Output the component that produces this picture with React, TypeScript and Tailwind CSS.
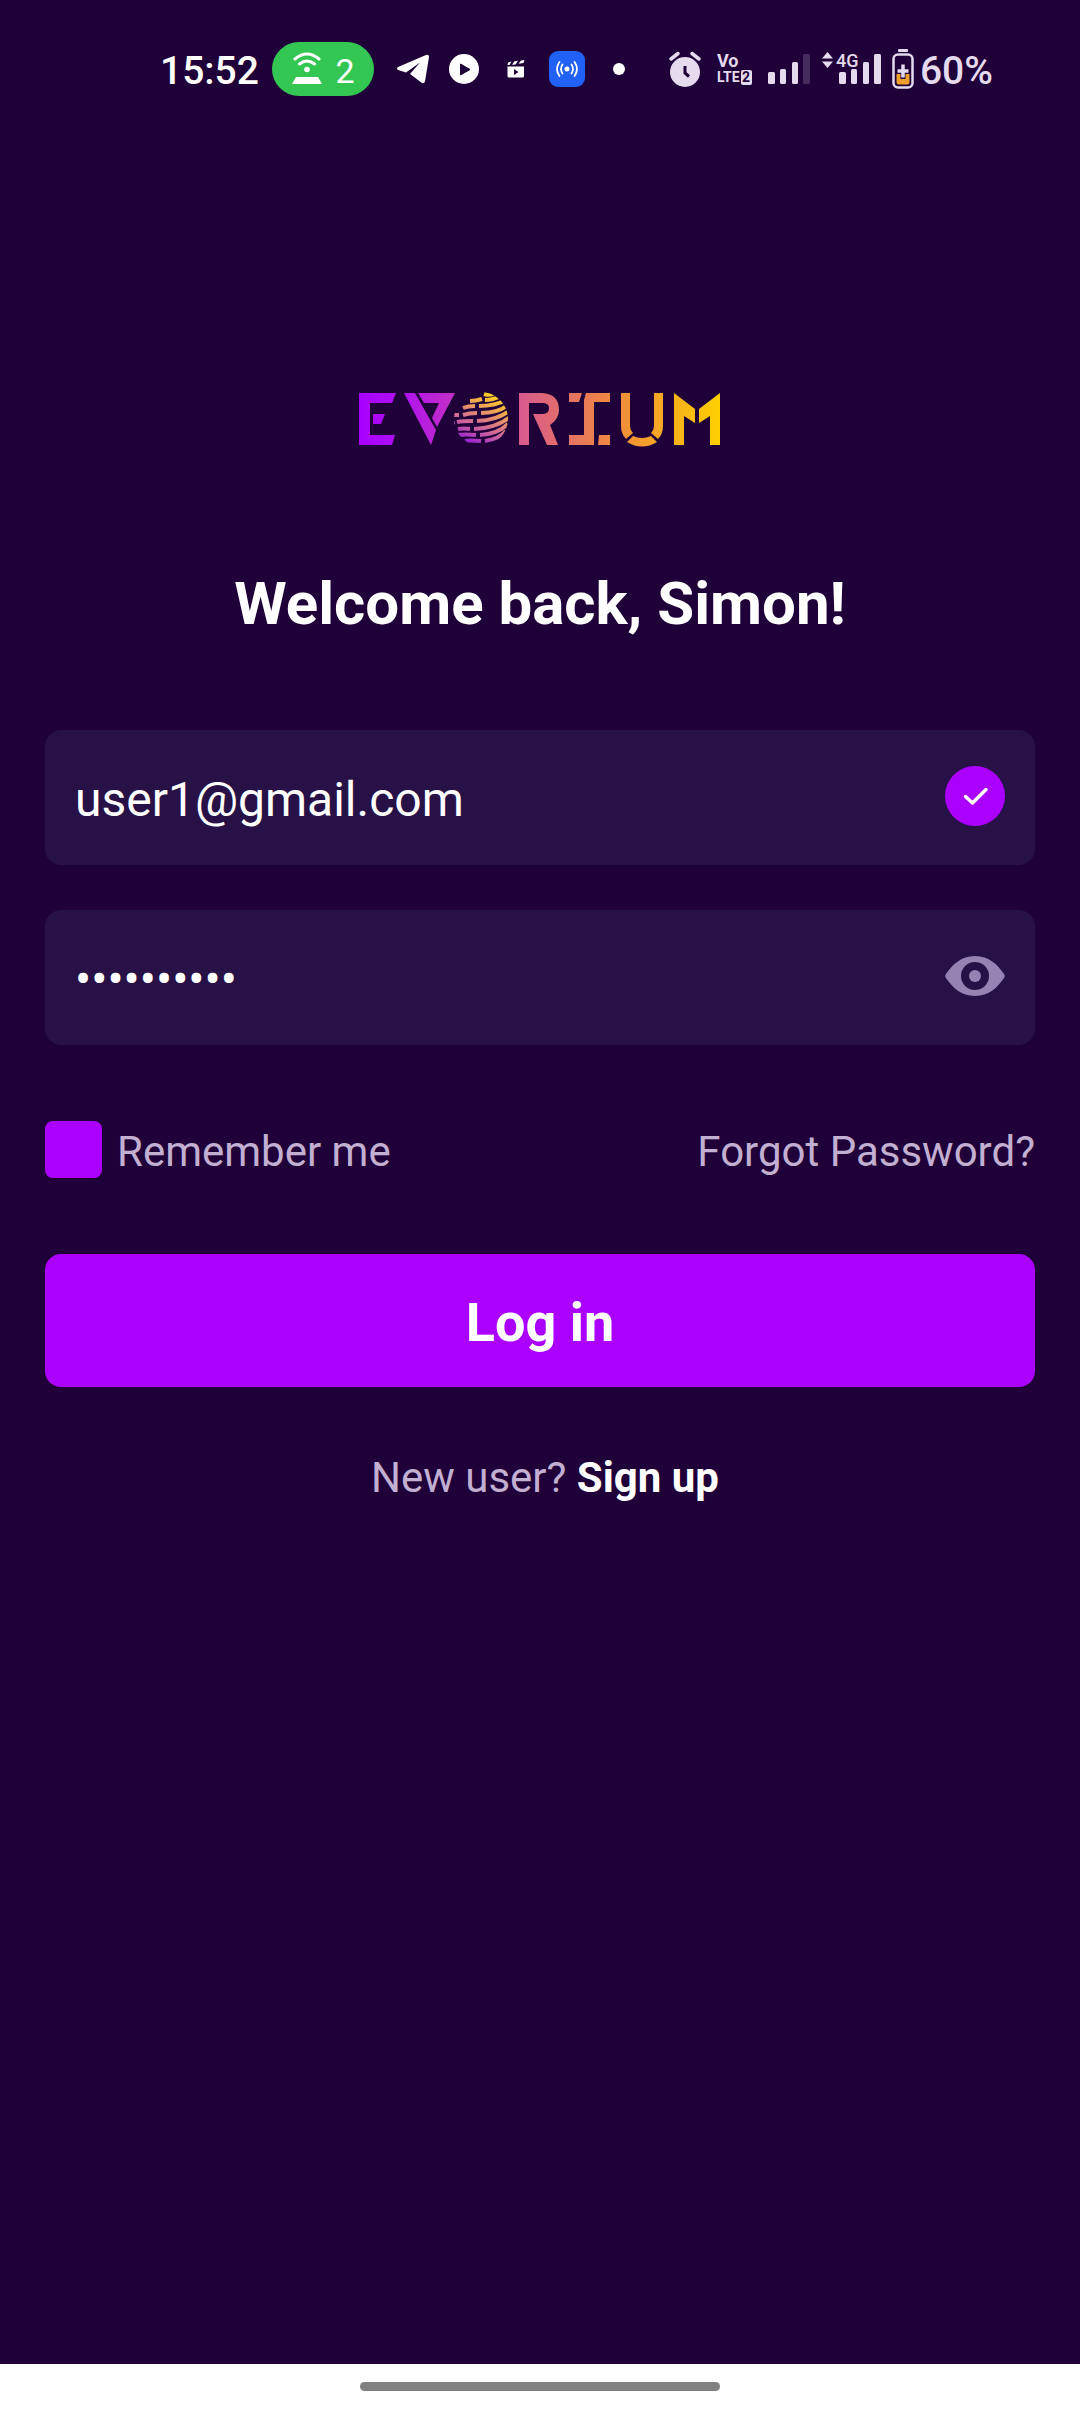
import { useState } from "react";

function Hotspot() {
  return (
    <svg width="32" height="34" viewBox="0 0 32 34" fill="none" aria-hidden="true">
      <path d="M4 7Q16 -3 28 7" stroke="#fff" strokeWidth="3" strokeLinecap="round" />
      <path d="M8.500 12Q16 6 23.500 12" stroke="#fff" strokeWidth="3" strokeLinecap="round" />
      <circle cx="16" cy="17.500" r="2.800" fill="#fff" />
      <path d="M5 25H27L31 32H1Z" fill="#fff" />
    </svg>
  );
}

function Telegram() {
  return (
    <svg width="34" height="32" viewBox="0 0 34 32" aria-hidden="true">
      <path
        d="M30 2L2 14Q0 15.500 2 17L10 19.500L24 9.500L14 21L26 30Q28 31 29 28.500L33 4Q33 1 30 2Z"
        fill="#fff"
      />
    </svg>
  );
}

function PlayCircle() {
  return (
    <svg width="30" height="30" viewBox="0 0 30 30" aria-hidden="true">
      <circle cx="15" cy="15" r="15" fill="#fff" />
      <path d="M11.500 10V21L21 15.500Z" fill="#1f0038" stroke="#1f0038" strokeLinejoin="round" />
    </svg>
  );
}

function Clapper() {
  return (
    <svg width="18" height="18" viewBox="0 0 18 18" fill="#fff" aria-hidden="true">
      <path d="M1 2.500L4.500 1.500L2.500 5H0.500ZM7.500 1.200L11 0.800L8.500 4.500L5 4.800ZM14 0.500L17.500 0L16.500 3L11.500 3.800Z" />
      <path fillRule="evenodd" d="M0.500 6.500H17V16Q17 17.500 15.500 17.500H2Q0.500 17.500 0.500 16ZM7 9V15L11.500 12Z" />
    </svg>
  );
}

function Broadcast() {
  return (
    <svg width="36" height="36" viewBox="0 0 36 36" fill="none" aria-hidden="true">
      <rect width="36" height="36" rx="9" fill="#2161f5" />
      <circle cx="18" cy="18" r="2.500" fill="#fff" />
      <g stroke="#fff" strokeWidth="1.800" strokeLinecap="round">
        <path d="M13.500 13.500Q10.500 18 13.500 22.500M22.500 13.500Q25.500 18 22.500 22.500" />
        <path d="M10.500 11Q5.500 18 10.500 25M25.500 11Q30.500 18 25.500 25" />
      </g>
    </svg>
  );
}

function Alarm() {
  return (
    <svg width="34" height="36" viewBox="0 0 34 36" aria-hidden="true">
      <circle cx="17" cy="21" r="15" fill="#e5daee" />
      <path d="M3 8L10 2.500M31 8L24 2.500" stroke="#e5daee" strokeWidth="3.500" strokeLinecap="round" />
      <path d="M17 15V22L21 25.500" fill="none" stroke="#1f0038" strokeWidth="3" />
    </svg>
  );
}

function Bars({ weak = false }: { weak?: boolean }) {
  return (
    <svg width="44" height="31" viewBox="0 0 44 31" fill="#e5daee" aria-hidden="true">
      <rect x="1" y="18" width="7" height="12" rx="1.500" />
      <rect x="13" y="15" width="6" height="15" rx="1.500" />
      <rect x="25" y="8" width="6" height="22" rx="1.500" />
      <rect x="36" y="0" width="7" height="30" rx="1.500" opacity={weak ? 0.2 : 1} />
    </svg>
  );
}

function DataArrows() {
  return (
    <svg width="11" height="16" viewBox="0 0 11 16" fill="#e5daee" aria-hidden="true">
      <path d="M5.500 0L11 6.500H0ZM5.500 16L0 9.500H11Z" />
    </svg>
  );
}

function Battery() {
  return (
    <svg width="22" height="40" viewBox="0 0 22 40" fill="none" aria-hidden="true">
      <rect x="6" y="0" width="10" height="3" rx="1" fill="#e5daee" />
      <rect x="1.500" y="5.500" width="19" height="33" rx="4.500" stroke="#e5daee" strokeWidth="2.500" />
      <path d="M4.500 25H17.500V33Q17.500 35.500 15 35.500H7Q4.500 35.500 4.500 33Z" fill="#efa02c" />
      <path d="M11 14V30M4 22.500H18" stroke="#1f0038" strokeWidth="5" />
      <path d="M11 15.500V28.500M5.500 22H16.500" stroke="#e5daee" strokeWidth="3.500" />
    </svg>
  );
}

function StatusBar() {
  return (
    <header className="flex h-[138px] items-center justify-between pr-[87px] pl-40 text-[39px] leading-none">
      <div className="flex items-center">
        <span className="pt-1 font-medium text-white">15:52</span>
        <span className="ml-[13px] flex h-[54px] w-[102px] items-center justify-center gap-3 rounded-full bg-[#34c652] text-[34px] text-white">
          <Hotspot />
          <span className="pt-1">2</span>
        </span>
        <span className="ml-[22px] flex items-center">
          <Telegram />
          <span className="ml-[19px]"><PlayCircle /></span>
          <span className="ml-7"><Clapper /></span>
          <span className="ml-6"><Broadcast /></span>
          <span className="ml-7 size-3 rounded-full bg-white" />
        </span>
      </div>
      <div className="flex items-center text-[#e5daee]">
        <Alarm />
        <span className="ml-[15px] flex w-9 flex-col text-[18px] leading-4 font-bold">
          <span>Vo</span>
          <span className="flex items-center text-[14px]">
            LTE
            <span className="ml-px w-[11px] rounded-xs bg-[#e5daee] text-center leading-[15px] text-[#1f0038]">2</span>
          </span>
        </span>
        <span className="ml-[14px]"><Bars weak /></span>
        <span className="relative ml-[27px]">
          <Bars />
          <span className="absolute -top-[2px] -left-4 flex items-start gap-[3px] text-[18px] leading-[18px] font-medium">
            <DataArrows />
            4G
          </span>
        </span>
        <span className="ml-[10px]"><Battery /></span>
        <span className="ml-[6px] pt-1 font-medium">60%</span>
      </div>
    </header>
  );
}

function Logo() {
  return (
    <svg width="362" height="56" viewBox="0 0 362 56" role="img" aria-label="Evorium">
      <defs>
        <linearGradient id="brand" gradientUnits="userSpaceOnUse" x1="0" y1="0" x2="362" y2="0">
          <stop offset="0" stopColor="#a800ff" />
          <stop offset="0.120" stopColor="#b011ef" />
          <stop offset="0.450" stopColor="#d95a8c" />
          <stop offset="0.700" stopColor="#f0893f" />
          <stop offset="1" stopColor="#ffd000" />
        </linearGradient>
        <linearGradient id="globe" gradientUnits="userSpaceOnUse" x1="134" y1="3" x2="112" y2="54">
          <stop offset="0" stopColor="#ffd01f" />
          <stop offset="0.400" stopColor="#e58a72" />
          <stop offset="0.700" stopColor="#c65aa6" />
          <stop offset="1" stopColor="#8f18dc" />
        </linearGradient>
        <clipPath id="disc">
          <circle cx="122" cy="27" r="27" />
        </clipPath>
      </defs>
      <g fill="url(#brand)">
        <path d="M0 1H37L33 11H11V43H36L33 53H0Z" />
        <path d="M14 22H26L22 32H14Z" />
        <path d="M45 1H56L77 38L72 53Z" />
        <path d="M59 1H96L78 35L73 26L80 11H65Z" />
        <path d="M160 1H183Q200 2 200 18Q200 27 191 33L199 53H188L174 22H183Q190 22 190 16Q190 11 183 11H170V53H160Z" />
        <path d="M210 1H223L220 10H210ZM227 1H251V10H235V53H210V43H225V8ZM240 43H251V53H239Z" />
        <path d="M262 1H271V34Q271 38 274 41L267 47Q262 42 262 34ZM304 1H295V34Q295 38 292 41L299 47Q304 42 304 34ZM274 44Q283 48 292 44L298 50Q283 59 268 50Z" />
        <path d="M315 1L336 17V31L325 24V53H315ZM361 1L340 17V31L351 24V53H361Z" />
      </g>
      <g clipPath="url(#disc)" fill="none" stroke="url(#globe)" strokeWidth="4">
        <path d="M125 2Q131 4 136 1" />
        <path d="M111 9Q117 9 123 7M126 8Q134 8 142 4" />
        <path d="M104 16Q109 14 116 14M120 14Q136 14 147 8" />
        <path d="M104 23Q110 21 118 21M122 21Q139 21 149 13" />
        <path d="M95 23H100M98 30Q104 29 114 29M118 29Q138 28 150 19" />
        <path d="M94 31H96M99 37Q104 36 111 37M115 37Q138 36 151 25" />
        <path d="M99 43Q106 42 117 43M121 43Q139 42 149 32" />
        <path d="M106 49Q111 48 122 49M126 49Q140 47 147 39" />
      </g>
    </svg>
  );
}

export default function App() {
  const [visible, setVisible] = useState(false);
  const [remember, setRemember] = useState(true);

  return (
    <div className="flex min-h-screen flex-col bg-[#1f0038] font-[Roboto,sans-serif]">
      <StatusBar />
      <main className="flex flex-1 flex-col items-center px-[45px] pt-[254px]">
        <Logo />
        <h1 className="mt-[120px] text-center text-[60px] leading-[72px] font-bold text-white">
          Welcome back, Simon!
        </h1>
        <form className="mt-[90px] flex w-full flex-col" onSubmit={(e) => e.preventDefault()}>
          <div className="flex h-[135px] items-center rounded-2xl bg-[#271147] px-[30px] pb-[3px]">
            <input
              type="email"
              aria-label="Email"
              defaultValue="user1@gmail.com"
              className="h-full min-w-0 flex-1 bg-transparent pt-[7px] text-[48px] text-white outline-none"
            />
            <svg width="60" height="60" viewBox="0 0 60 60" fill="none" aria-hidden="true">
              <circle cx="30" cy="30" r="30" fill="#ab00ff" />
              <path d="M20.500 30.500L27.500 37L41 23.500" stroke="#fff" strokeWidth="3.500" strokeLinecap="round" strokeLinejoin="round" />
            </svg>
          </div>
          <div className="mt-[45px] flex h-[135px] items-center rounded-2xl bg-[#271147] px-[30px] pb-[3px]">
            <input
              type={visible ? "text" : "password"}
              aria-label="Password"
              defaultValue="password12"
              className="h-full min-w-0 flex-1 bg-transparent pt-[7px] text-[48px] text-white outline-none"
            />
            <button type="button" aria-label="Show password" onClick={() => setVisible(!visible)}>
              <svg width="60" height="40" viewBox="0 0 60 40" aria-hidden="true">
                <path
                  fillRule="evenodd"
                  fill="#9682b3"
                  d="M30 0C44 0 53 9 59 18Q60.500 20 59 22C53 31 44 40 30 40S7 31 1 22Q-0.500 20 1 18C7 9 16 0 30 0ZM30 6A14 14 0 1 0 30 34A14 14 0 1 0 30 6Z"
                />
                <circle cx="30" cy="20" r="6" fill="#9682b3" />
              </svg>
            </button>
          </div>
          <div className="mt-[76px] flex items-center justify-between text-[42px] leading-[53px] text-[#c2afd2]">
            <label className="flex items-center gap-[15px]">
              <input
                type="checkbox"
                checked={remember}
                onChange={(e) => setRemember(e.target.checked)}
                className="size-[57px] appearance-none rounded-lg border-2 border-[#ab00ff] checked:bg-[#ab00ff]"
              />
              <span className="pt-1">Remember me</span>
            </label>
            <a href="#forgot" className="pt-1">Forgot Password?</a>
          </div>
          <button type="submit" className="mt-[76px] h-[133px] rounded-2xl bg-[#ab00ff] pt-1 text-[54px] font-bold text-white">
            Log in
          </button>
        </form>
        <p className="mt-[62px] pl-[10px] text-[42px] leading-[57px] text-[#c2afd2]">
          New user? <a href="#signup" className="font-bold text-white">Sign up</a>
        </p>
      </main>
      <footer className="flex h-12 justify-center bg-white pt-[18px]">
        <span className="h-[9px] w-1/3 rounded-full bg-[#808080]" />
      </footer>
    </div>
  );
}
